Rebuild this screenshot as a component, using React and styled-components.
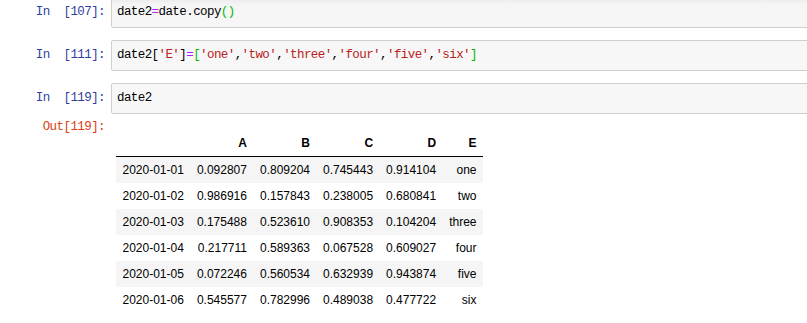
import React from "react";
import styled, { createGlobalStyle } from "styled-components";

const GlobalStyle = createGlobalStyle`
  html, body {
    margin: 0;
    padding: 0;
    background: #ffffff;
    overflow: hidden;
  }
`;

const Notebook = styled.div`
  width: 812px;
  margin-top: -3px;
  display: flex;
  flex-direction: column;
`;

const Cell = styled.div`
  display: grid;
  grid-template-columns: 105px 1fr;
  column-gap: 6px;
  margin-bottom: ${(p) => (p.$last ? "5px" : "12px")};
`;

const Prompt = styled.div`
  font-family: "Liberation Mono", "Courier New", monospace;
  font-size: 12.5px;
  letter-spacing: -0.58px;
  line-height: 17px;
  white-space: pre;
  text-align: right;
  color: ${(p) => (p.$out ? "#D84315" : "#303F9F")};
  padding-top: ${(p) => (p.$out ? "0" : "7px")};
`;

const InputBox = styled.div`
  box-sizing: border-box;
  height: 31px;
  border: 1px solid #cfcfcf;
  border-radius: 2px;
  background: ${(p) =>
    p.$shaded ? "linear-gradient(#eaeaea 0px, #f5f5f5 7px, #f6f6f6 100%)" : "#f7f7f7"};
  padding: 6px 5px;
  font-family: "Liberation Mono", "Courier New", monospace;
  font-size: 12.5px;
  letter-spacing: -0.58px;
  line-height: 17px;
  white-space: pre;
  color: #000;
`;

const Tok = styled.span`
  color: ${(p) =>
    p.$k === "op" ? "#AA22FF" : p.$k === "str" ? "#BA2121" : p.$k === "match" ? "#00bb00" : "#000"};
`;

const Output = styled.div`
  padding-left: 5px;
  padding-top: 11px;
`;

const Table = styled.table`
  border-collapse: collapse;
  border-spacing: 0;
  font-family: "Liberation Sans", Arial, sans-serif;
  font-size: 12px;
  color: #000;
`;

const Head = styled.thead`
  tr {
    border-bottom: 1px solid #000;
  }
`;

const Row = styled.tr`
  background: ${(p) => (p.$striped ? "#f5f5f5" : "#ffffff")};
`;

const HeadCell = styled.th`
  height: 26px;
  padding: 0 6.5px;
  text-align: right;
  font-weight: bold;
  white-space: nowrap;
  vertical-align: middle;
`;

const IndexCell = styled.th`
  height: 26px;
  padding: 0 6.5px;
  text-align: right;
  font-weight: normal;
  white-space: nowrap;
  vertical-align: middle;
`;

const DataCell = styled.td`
  height: 26px;
  padding: 0 6.5px;
  text-align: right;
  white-space: nowrap;
  vertical-align: middle;
`;

const rows = [
  ["2020-01-01", "0.092807", "0.809204", "0.745443", "0.914104", "one"],
  ["2020-01-02", "0.986916", "0.157843", "0.238005", "0.680841", "two"],
  ["2020-01-03", "0.175488", "0.523610", "0.908353", "0.104204", "three"],
  ["2020-01-04", "0.217711", "0.589363", "0.067528", "0.609027", "four"],
  ["2020-01-05", "0.072246", "0.560534", "0.632939", "0.943874", "five"],
  ["2020-01-06", "0.545577", "0.782996", "0.489038", "0.477722", "six"],
];

const strs = ["one", "two", "three", "four", "five", "six"];

export default function App() {
  return (
    <>
      <GlobalStyle />
      <Notebook>
        <Cell>
          <Prompt>{"In  [107]:"}</Prompt>
          <InputBox $shaded>
            date2<Tok $k="op">=</Tok>date.copy<Tok $k="match">()</Tok>
          </InputBox>
        </Cell>
        <Cell>
          <Prompt>{"In  [111]:"}</Prompt>
          <InputBox>
            date2[<Tok $k="str">'E'</Tok>]<Tok $k="op">=</Tok>
            <Tok $k="match">[</Tok>
            {strs.map((s, i) => (
              <React.Fragment key={s}>
                <Tok $k="str">'{s}'</Tok>
                {i < strs.length - 1 ? "," : null}
              </React.Fragment>
            ))}
            <Tok $k="match">]</Tok>
          </InputBox>
        </Cell>
        <Cell $last>
          <Prompt>{"In  [119]:"}</Prompt>
          <InputBox>date2</InputBox>
        </Cell>
        <Cell>
          <Prompt $out>{"Out[119]:"}</Prompt>
          <Output>
            <Table>
              <Head>
                <tr>
                  <HeadCell></HeadCell>
                  <HeadCell>A</HeadCell>
                  <HeadCell>B</HeadCell>
                  <HeadCell>C</HeadCell>
                  <HeadCell>D</HeadCell>
                  <HeadCell>E</HeadCell>
                </tr>
              </Head>
              <tbody>
                {rows.map((r, i) => (
                  <Row key={r[0]} $striped={i % 2 === 0}>
                    <IndexCell>{r[0]}</IndexCell>
                    {r.slice(1).map((v, j) => (
                      <DataCell key={j}>{v}</DataCell>
                    ))}
                  </Row>
                ))}
              </tbody>
            </Table>
          </Output>
        </Cell>
      </Notebook>
    </>
  );
}
